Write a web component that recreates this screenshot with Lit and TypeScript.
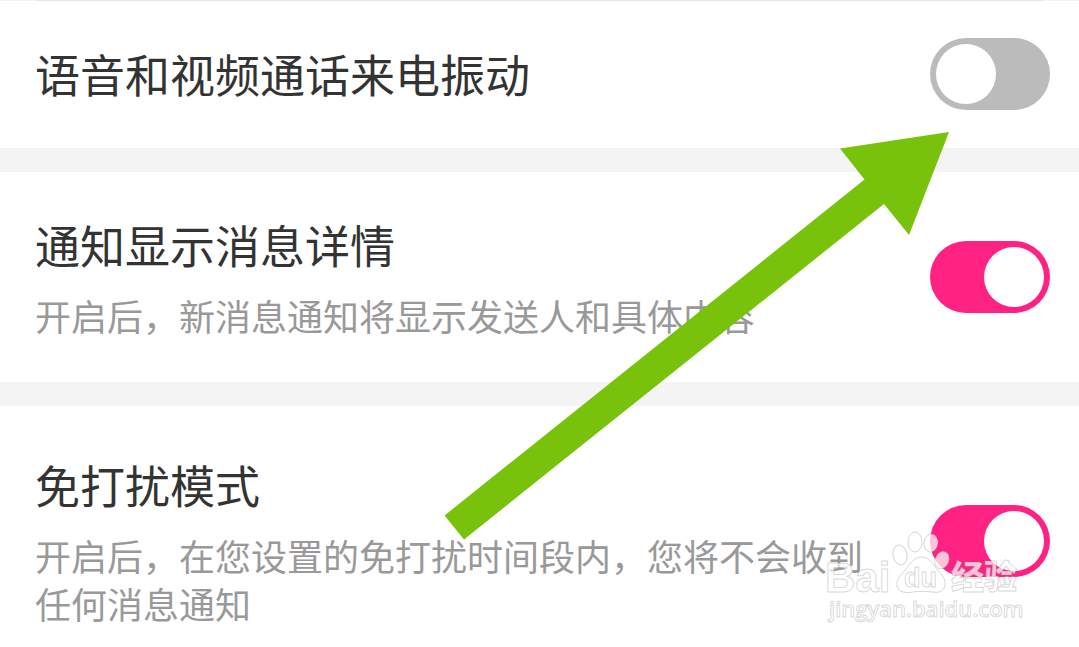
import { LitElement, html, css, nothing } from "lit";
import { customElement, property, state } from "lit/decorators.js";

interface Setting {
  id: string;
  title: string;
  note?: string;
  on: boolean;
}

@customElement("setting-row")
export class SettingRow extends LitElement {
  @property() heading = "";
  @property() note = "";
  @property({ type: Boolean }) on = false;

  static styles = css`
    :host {
      display: flex;
      align-items: center;
      justify-content: space-between;
      gap: 32px;
      padding: 43px 29px 43px 35px;
      background: #fff;
    }
    .text {
      flex: 1;
      max-width: 829px;
    }
    .title {
      display: block;
      font-size: 45px;
      line-height: 60px;
      color: #333;
    }
    .note {
      margin: 16px 0 0;
      font-size: 36px;
      line-height: 48px;
      color: #999;
    }
    .switch {
      appearance: none;
      flex: none;
      display: flex;
      box-sizing: border-box;
      width: 120px;
      height: 72px;
      margin: 0;
      padding: 6px;
      border-radius: 36px;
      background: #bbb;
      cursor: pointer;
    }
    .switch::before {
      content: "";
      width: 60px;
      height: 60px;
      border-radius: 50%;
      background: #fff;
    }
    .switch:checked {
      justify-content: flex-end;
      background: #ff2282;
    }
  `;

  render() {
    return html`
      <div class="text">
        <label class="title" for="switch">${this.heading}</label>
        ${this.note ? html`<p class="note" id="note">${this.note}</p>` : nothing}
      </div>
      <input
        class="switch"
        id="switch"
        type="checkbox"
        role="switch"
        .checked=${this.on}
        @change=${(e: Event) => (this.on = (e.target as HTMLInputElement).checked)}
      />
    `;
  }
}

@customElement("app-root")
export class AppRoot extends LitElement {
  @state() private settings: Setting[] = [
    { id: "vibrate", title: "语音和视频通话来电振动", on: false },
    {
      id: "detail",
      title: "通知显示消息详情",
      note: "开启后，新消息通知将显示发送人和具体内容",
      on: true,
    },
    {
      id: "quiet",
      title: "免打扰模式",
      note: "开启后，在您设置的免打扰时间段内，您将不会收到任何消息通知",
      on: true,
    },
  ];

  static styles = css`
    :host {
      display: block;
      position: relative;
      height: 100vh;
      overflow: hidden;
      background: #f4f4f4;
      font-family: "Noto Sans CJK SC", sans-serif;
    }
    .rule {
      height: 1px;
      margin: 0 36px;
      background: #e5e5e5;
    }
    .list {
      display: flex;
      flex-direction: column;
      gap: 24px;
    }
    .vibrate {
      padding-top: 37px;
      padding-bottom: 38px;
    }
    .quiet {
      padding-top: 49px;
      padding-bottom: 49px;
    }
    .arrow {
      position: absolute;
      left: 444px;
      top: 131px;
      pointer-events: none;
    }
    .watermark {
      position: absolute;
      left: 820px;
      top: 525px;
      pointer-events: none;
      fill: #fff;
      fill-opacity: 0.72;
      stroke: #777;
      stroke-opacity: 0.3;
      stroke-width: 1;
      font-family: "Liberation Sans", "Noto Sans CJK SC", sans-serif;
    }
    .brand {
      font-size: 42px;
      font-weight: 700;
    }
    .du {
      font-size: 27px;
      font-weight: 700;
    }
    .han {
      font-family: "Noto Sans CJK SC", sans-serif;
      font-size: 33px;
      font-weight: 900;
    }
    .site {
      font-family: "Open Sans", sans-serif;
      font-size: 22px;
      font-weight: 600;
    }
  `;

  render() {
    return html`
      <div class="rule"></div>
      <main class="list">
        ${this.settings.map(
          (s) => html`<setting-row
            class=${s.id}
            .heading=${s.title}
            .note=${s.note ?? ""}
            .on=${s.on}
          ></setting-row>`
        )}
      </main>
      <svg class="arrow" width="506" height="410" viewBox="444 131 506 410" aria-hidden="true">
        <path fill="#78c20c" d="M949 132 840 148.500 864.500 179.500 444.500 515.500 464 539.500 884 204 909 235Z" />
      </svg>
      <svg class="watermark" width="210" height="104" viewBox="820 525 210 104">
        <text class="brand" x="825" y="592">Bai</text>
        <ellipse cx="900" cy="555" rx="7" ry="10" transform="rotate(-12 900 555)" />
        <ellipse cx="915" cy="542" rx="7" ry="10" />
        <ellipse cx="931" cy="543" rx="7" ry="9" transform="rotate(8 931 543)" />
        <ellipse cx="942" cy="560" rx="7" ry="9" transform="rotate(22 942 560)" />
        <path
          d="M922 557C929 557 932 563 936 568C941 574 946 578 945 585C944 592 938 593 932 592C925 591 920 591 913 592C906 593 899 593 897 586C896 579 901 575 906 569C911 563 914 557 922 557Z"
        />
        <text class="du" x="904" y="587">du</text>
        <text class="han" x="951" y="589">经验</text>
        <text class="site" x="829" y="617">jingyan.baidu.com</text>
      </svg>
    `;
  }
}
